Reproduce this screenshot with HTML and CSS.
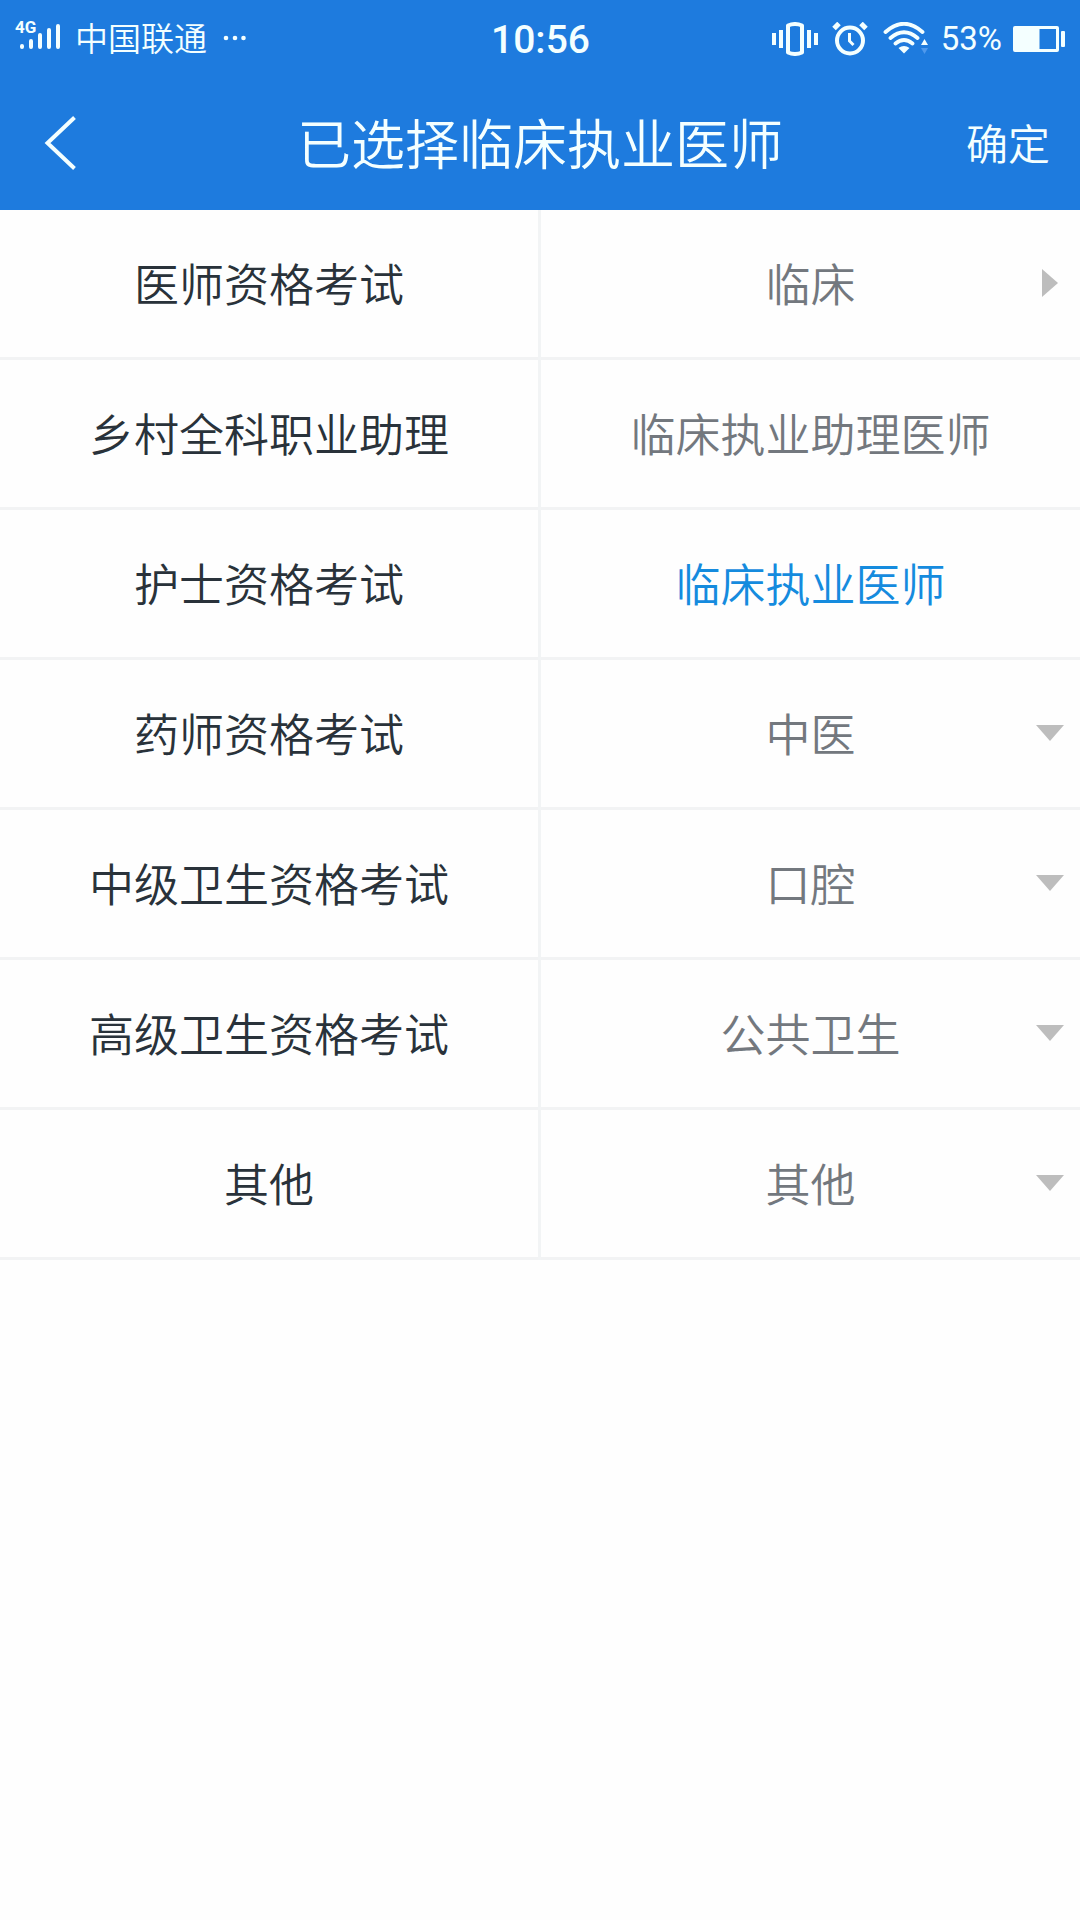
FILE: index.html
```
<!DOCTYPE html>
<html lang="zh-CN">
<head>
  <meta charset="UTF-8" />
  <meta name="viewport" content="width=device-width, initial-scale=1.0"/>
  <title>已选择临床执业医师</title>
  <link rel="stylesheet" href="styles.css">
</head>
<body>

  <header class="header">
    <!-- Status bar -->
    <div class="status">
      <div class="status-left">
        <svg class="signal" width="48" height="34" viewBox="0 0 48 34">
          <text class="signal-label" x="-1" y="14">4G</text>
          <path d="M6 27v1M15 22v6M24 16v12M33 11v17M42 7v21" fill="none" stroke="currentColor" stroke-width="4" stroke-linecap="round"/>
        </svg>
        <span class="carrier">中国联通</span>
        <svg class="dots" width="24" height="6" viewBox="0 0 24 6" fill="currentColor">
          <circle cx="3" cy="3" r="2.3"/><circle cx="12" cy="3" r="2.3"/><circle cx="20.5" cy="3" r="2.3"/>
        </svg>
      </div>
      <div class="time">10:56</div>
      <div class="status-right">
        <svg class="vibrate" width="46" height="34" viewBox="0 0 46 34">
          <path d="M16 3.5Q23 .5 30 3.5V30.500Q23 33.500 16 30.500Z" fill="none" stroke="currentColor" stroke-width="4" stroke-linejoin="round"/>
          <path d="M2 11v12M9 8v18M37 8v18M44 11v12" fill="none" stroke="currentColor" stroke-width="4"/>
        </svg>
        <svg class="alarm" width="36" height="34" viewBox="0 0 36 34" fill="none" stroke="currentColor">
          <circle cx="18" cy="18.500" r="13" stroke-width="4"/>
          <path d="M17.500 11v8l4 4" stroke-width="3"/>
          <path d="M2 6.500l5-5M29 1.500l5 5" stroke-width="5"/>
        </svg>
        <svg class="wifi" width="46" height="34" viewBox="0 0 46 34">
          <path d="M2.500 10Q21 -6.500 39.500 10M7.500 16Q21 4.500 34.500 16M12.500 21.500Q21 14.500 29.500 21.500" fill="none" stroke="currentColor" stroke-width="3.800" stroke-linecap="round"/>
          <path d="M15.500 26Q21 22 26.500 26L21 31.500Z" fill="currentColor"/>
          <path d="M38 23l3.500-6 3.500 6z" fill="currentColor"/>
          <path d="M38 26h7l-3.500 6z" fill="#4f99ec"/>
        </svg>
        <span class="percent">53%</span>
        <svg class="battery" width="52" height="26" viewBox="0 0 52 26">
          <path fill="currentColor" fill-rule="evenodd" d="M1 0H44Q46 0 46 2V24Q46 26 44 26H2Q0 26 0 24V2Q0 0 2 0ZM26.500 3V23H43V3Z"/>
          <rect x="48" y="5" width="4" height="16" rx="1" fill="currentColor"/>
        </svg>
      </div>
    </div>

    <!-- Title bar -->
    <div class="navbar">
      <svg class="back" width="34" height="56" viewBox="0 0 34 56">
        <path d="M30.500 2.500L3.500 28L30.500 53.500" fill="none" stroke="currentColor" stroke-width="4"/>
      </svg>
      <h1>已选择临床执业医师</h1>
      <span class="confirm">确定</span>
    </div>
  </header>

  <main class="columns">
    <ul class="list categories">
      <li>医师资格考试</li>
      <li>乡村全科职业助理</li>
      <li>护士资格考试</li>
      <li>药师资格考试</li>
      <li>中级卫生资格考试</li>
      <li>高级卫生资格考试</li>
      <li>其他</li>
    </ul>
    <ul class="list options">
      <li class="open">临床</li>
      <li>临床执业助理医师</li>
      <li class="selected">临床执业医师</li>
      <li class="closed">中医</li>
      <li class="closed">口腔</li>
      <li class="closed">公共卫生</li>
      <li class="closed">其他</li>
    </ul>
  </main>

</body>
</html>
```
FILE: styles.css
```
* {
  box-sizing: border-box;
}

body {
  margin: 0;
  min-height: 100vh;
  background-color: #fefefe;
  font-family: "Noto Sans CJK SC", sans-serif;
  font-weight: 350;
}

.header {
  height: 210px;
  background-color: #1e7bde;
  color: #f4ffff;
}

/* status bar */
.status {
  display: grid;
  grid-template-columns: 1fr auto 1fr;
  align-items: center;
  height: 76px;
  padding: 0 15px 0 16px;
}

.status-left,
.status-right {
  display: flex;
  align-items: center;
}

.status-right {
  justify-content: flex-end;
}

.signal {
  margin-top: -6px;
  overflow: visible;
}

.signal-label {
  font: 700 17px Roboto, sans-serif;
  fill: currentColor;
}

.carrier {
  margin-left: 11px;
  padding-bottom: 4px;
  font-size: 33px;
  line-height: 72px;
}

.dots {
  margin-left: 16px;
  margin-bottom: 2px;
}

.time {
  padding-top: 2px;
  font: 500 39px/76px Roboto, sans-serif;
}

.alarm {
  margin-left: 14px;
}

.wifi {
  margin-left: 15px;
}

.percent {
  margin-left: 12px;
  font: 400 33px/78px Roboto, sans-serif;
}

.battery {
  margin-left: 11px;
}

/* title bar */
.navbar {
  display: grid;
  grid-template-columns: 1fr auto 1fr;
  align-items: center;
  height: 134px;
  padding: 0 30px;
}

.back {
  margin-left: 14px;
}

.navbar h1 {
  margin: 0;
  padding-bottom: 2px;
  font-size: 54px;
  font-weight: 350;
  line-height: 132px;
}

.confirm {
  justify-self: end;
  padding-bottom: 4px;
  font-size: 42px;
}

/* two column picker */
.columns {
  display: grid;
  grid-template-columns: 541px 1fr;
}

.list {
  margin: 0;
  padding: 0;
  list-style: none;
}

.list li {
  display: flex;
  align-items: center;
  justify-content: center;
  position: relative;
  height: 150px;
  padding-bottom: 2px;
  border-bottom: 3px solid #f2f3f4;
  font-size: 45px;
  line-height: 60px;
}

.categories {
  border-right: 3px solid #f2f4f5;
  color: #29323a;
}

.options {
  color: #73787e;
}

.options .selected {
  color: #158bde;
}

/* arrows at the right edge of a row */
.open::after,
.closed::after {
  content: "";
  position: absolute;
  background-color: #bdbdbd;
}

.open::after {
  top: 59px;
  right: 22px;
  width: 16px;
  height: 28px;
  clip-path: polygon(0 0, 100% 50%, 0 100%);
}

.closed::after {
  top: 65px;
  right: 16px;
  width: 28px;
  height: 16px;
  clip-path: polygon(0 0, 100% 0, 50% 100%);
}
```
